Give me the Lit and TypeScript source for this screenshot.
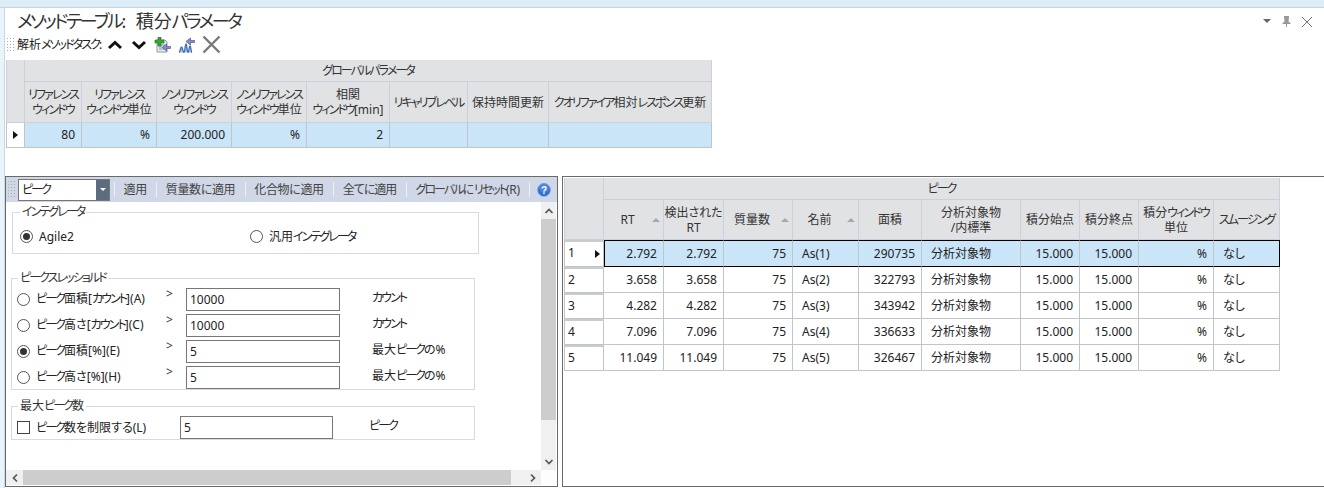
import { LitElement, html, css } from "lit";
import { customElement } from "lit/decorators.js";

/* Katakana is much narrower in the reference's UI face, so kana runs get their own tracking. */
const t = (s: string) =>
  s.split(/([\u30A0-\u30FF]+)/).map((p, i) => (i % 2 ? html`<span class="k">${p}</span>` : p));

const chevron = (d: string) => html`<svg class="sc" viewBox="0 0 10 10"><path d=${d} fill="none" stroke="#555" stroke-width="1.7"/></svg>`;

const rows = [
  ["2.792", "75", "As(1)", "290735"],
  ["3.658", "75", "As(2)", "322793"],
  ["4.282", "75", "As(3)", "343942"],
  ["7.096", "75", "As(4)", "336633"],
  ["11.049", "75", "As(5)", "326467"],
];

const thresholds = [
  { label: "ピーク面積[カウント](A)", value: "10000", unit: "カウント", on: false },
  { label: "ピーク高さ[カウント](C)", value: "10000", unit: "カウント", on: false },
  { label: "ピーク面積[%](E)", value: "5", unit: "最大ピークの%", on: true },
  { label: "ピーク高さ[%](H)", value: "5", unit: "最大ピークの%", on: false },
];

@customElement("app-root")
export class AppRoot extends LitElement {
  static styles = css`
    :host {
      display: block; width: 1324px; height: 488px; overflow: hidden; background: #e9f3fa;
      font: 12px/16px "Noto Sans", "Noto Sans CJK JP", sans-serif; color: #222;
      font-feature-settings: "palt";
    }
    * { box-sizing: border-box; }
    .k { letter-spacing: -0.16em; }
    .strip { height: 8px; background: #dcedf8; border-bottom: 1px solid #c3d5e0; }
    .main { margin-left: 4px; height: 480px; background: #fff; border-left: 1px solid #cbd8e2; display: flex; flex-direction: column; }
    .top { height: 168px; padding-left: 1px; }
    .titlebar { height: 25px; display: flex; align-items: center; padding: 0 11px; justify-content: space-between; }
    .title { font-size: 18px; line-height: 24px; color: #333; white-space: pre; }
    .title .k { letter-spacing: -0.14em; }
    .winbtns { display: flex; align-items: center; gap: 9px; margin-top: 2px; }
    .taskbar { height: 27px; display: flex; align-items: center; padding-bottom: 4px; }
    .grip { width: 9px; height: 15px; margin-right: 2px; background-image: radial-gradient(#aaa 0.7px, transparent 0.9px); background-size: 3px 3px; }
    .tasklabel { width: 90px; white-space: nowrap; }
    .taskicons { display: flex; align-items: center; }
    .taskicons svg { display: block; }

    .grid { display: grid; }
    .g1 { width: 706px; grid-template-columns: 19px 57px 75px 75px 75px 83px 78px 81px 163px; grid-template-rows: 22px 41px 25px; }
    .g2 { width: 716px; grid-template-columns: 40px 60px 60px 69px 66px 63px 99px 59px 59px 75px 66px; grid-template-rows: 22px 40px 27px 26px 26px 26px 26px; }
    .c { display: flex; align-items: center; border-right: 1px solid #c0c5c9; border-bottom: 1px solid #c0c5c9; padding: 0 6px; white-space: nowrap; position: relative; }
    .h { background: #e1e2e4; border-color: #cdcfdf; justify-content: center; text-align: center; padding: 0 1px; line-height: 15px; color: #333; }
    .stub { grid-row: span 2; border-left: 1px solid #cdcfdf; }
    .group { grid-column: 2 / -1; }
    .r { justify-content: flex-end; }
    .l { padding-left: 9px; }
    .sel { background: #cbe5f8; }
    .hot { border-top: 1px solid #000; border-bottom: 1px solid #000; }
    .hot.first { border-left: 1px solid #000; }
    .hot.last { border-right: 1px solid #000; }
    .rh { background: #fff; justify-content: space-between; align-items: flex-start; padding: 3px 3px 0 3px; border-left: 1px solid #c0c5c9; border-top: 2px solid #c8ccd0; }
    .rh1 { border-left: 1px solid #c0c5c9; background: #fff; justify-content: center; padding: 0; }
    .tri { width: 0; height: 0; border-left: 5px solid #111; border-top: 4.5px solid transparent; border-bottom: 4.5px solid transparent; }
    .rh .tri { margin-top: 5px; }
    .sorted { padding-right: 13px; }
    .sort { position: absolute; right: 3px; top: 18px; width: 0; height: 0; border-bottom: 4px solid #a8a8a8; border-left: 4px solid transparent; border-right: 4px solid transparent; }

    .bottom { flex: 1; height: 311px; display: flex; gap: 4px; background: #fff; padding-bottom: 1px; }
    .left { width: 553px; flex: none; display: flex; flex-direction: column; border: 1px solid #6a6a6a; }
    .right { flex: 1; border: 1px solid #6a6a6a; border-right: 0; padding: 1px 0 0 1px; }
    .tb { height: 25px; flex: none; background: #d0d7e6; display: flex; align-items: center; color: #444; }
    .tb .grip { width: 8px; margin: 0 3px 0 0; height: 19px; flex: none; margin-left: 1px; }
    .combo { width: 92px; flex: none; height: 22px; background: #fff; border: 1px solid #777; display: flex; justify-content: space-between; align-items: center; padding-left: 3px; color: #222; }
    .dd { width: 13px; height: 20px; background: #5b6b80; display: flex; align-items: center; justify-content: center; }
    .dd i { border-top: 3px solid #fff; border-left: 3.5px solid transparent; border-right: 3.5px solid transparent; }
    .gap4 { width: 4px; flex: none; }
    .sep { width: 1px; height: 15px; background: #eef0f5; flex: none; }
    .btn { white-space: nowrap; padding: 0 9.5px 0 8.5px; letter-spacing: -0.35px; }
    .btn.tight { letter-spacing: -1px; }
    .help { width: 14px; height: 14px; margin-left: 7px; display: block; flex: none; }

    .body { flex: 1; display: grid; grid-template-columns: 535px 15px; grid-template-rows: 268px 15px; min-height: 0; }
    .content { padding: 0 0 0 6px; background: #fff; }
    fieldset { border: 1px solid #dadada; margin: 0; padding: 0; min-width: 0; }
    legend { padding: 0 2px; line-height: 16px; color: #333; }
    .f1 { width: 467px; height: 50px; margin-top: 2px; }
    .f1 legend { margin-left: 7px; }
    .f1row { display: flex; align-items: center; height: 33px; padding-left: 7px; }
    .f1row > .opt:first-child { width: 230px; }
    .f2 { width: 464px; height: 120px; margin-top: 16px; margin-left: -1px; }
    .f2 legend, .f3 legend { margin-left: 6px; }
    .trow { height: 26px; display: grid; grid-template-columns: 149px 20px 154px 1fr; align-items: center; padding-left: 5px; }
    .opt { display: flex; align-items: center; gap: 6px; white-space: nowrap; }
    .radio { width: 13px; height: 13px; border: 1px solid #555; border-radius: 50%; display: flex; align-items: center; justify-content: center; flex: none; background: #fff; }
    .radio i { width: 7px; height: 7px; border-radius: 50%; background: #333; }
    .gt { margin-top: -10px; color: #333; }
    input { height: 23px; width: 154px; border: 1px solid #777; padding: 0 3px; font: inherit; color: #222; background: #fff; outline: none; display: block; }
    .unit { padding-left: 32px; white-space: nowrap; margin-top: -3px; }
    .f3 { width: 464px; height: 42px; margin-top: 8px; margin-left: -1px; }
    .lrow { display: grid; grid-template-columns: 163px 153px 1fr; align-items: center; padding: 2px 0 0 5px; }
    .lrow input { width: 153px; }
    .check { width: 13px; height: 13px; border: 1px solid #444; flex: none; background: #fff; }
    .unit2 { padding-left: 36px; margin-top: -4px; white-space: nowrap; }
    .vbar { background: #f0f0f0; display: flex; flex-direction: column; }
    .hbar { background: #f0f0f0; display: flex; }
    .corner { background: #fdfdfd; }
    .sb { flex: none; width: 15px; height: 17px; display: flex; align-items: center; justify-content: center; }
    .hbar .sb { width: 17px; height: 15px; }
    .sc { width: 10px; height: 10px; display: block; }
    .thumb { background: #cdcdcd; }
    .vbar .thumb { height: 201px; }
    .hbar .thumb { width: 488px; }
    .fill { flex: 1; }
    .m8 { margin-right: 8px; }
    .m7 { margin-right: 7px; }
  `;

  private taskIcons() {
    return html`<div class="taskicons">
      <svg class="m8" width="16" height="12" viewBox="0 0 16 12"><path d="M2 9 8 3.500 14 9" fill="none" stroke="#111" stroke-width="3"/></svg>
      <svg class="m7" width="16" height="12" viewBox="0 0 16 12"><path d="M2 3 8 8.500 14 3" fill="none" stroke="#111" stroke-width="3"/></svg>
      <svg class="m7" width="17" height="16" viewBox="0 0 17 16">
        <path d="M3 3h8l2 2v10H3z" fill="#e6ecef" stroke="#8b9aa3"/>
        <path d="M5 8h6M5 10h6M5 12h6" stroke="#7f94a8"/>
        <path d="M4 0h3v3h3v3H7v3H4V6H1V3h3z" fill="#3aa63a" stroke="#1c6f1c" stroke-width=".6"/>
        <path d="M16.500 9.500h-4V7L8.500 10.500 12.500 14v-2.500h4z" fill="#8f8bc9" stroke="#55518f" stroke-width=".7"/>
      </svg>
      <svg class="m7" width="17" height="16" viewBox="0 0 17 16">
        <path d="M1 15.500C2 15.500 2.500 10 3.500 10S5 15.500 6 15.500 7 7 8 7 9 15.500 10 15.500 11 9 12 9 13 15.500 14 15.500" fill="#a9c0e2" stroke="#3f6fb5" stroke-width="1.300"/>
        <path d="M16.500 3.500h-4V1L8 4.500 12.500 8V5.500h4z" fill="#8f8bc9" stroke="#55518f" stroke-width=".7"/>
      </svg>
      <svg width="19" height="19" viewBox="0 0 19 19"><path d="M1.500 1.500 17.500 17.500M17.500 1.500 1.500 17.500" stroke="#787878" stroke-width="2.400"/></svg>
    </div>`;
  }

  private table1() {
    const heads = ["リファレンス\nウィンドウ", "リファレンス\nウィンドウ単位", "ノンリファレンス\nウィンドウ", "ノンリファレンス\nウィンドウ単位", "相関\nウィンドウ[min]", "リキャリブレベル", "保持時間更新", "クオリファイア相対レスポンス更新"];
    const vals = ["80", "%", "200.000", "%", "2", "", "", ""];
    return html`<div class="grid g1">
      <div class="c h stub"></div>
      <div class="c h group">${t("グローバルパラメータ")}</div>
      ${heads.map((h) => html`<div class="c h"><div>${h.split("\n").map((s, i) => html`${i ? html`<br />` : ""}${t(s)}`)}</div></div>`)}
      <div class="c rh1"><span class="tri"></span></div>
      ${vals.map((v) => html`<div class="c r sel">${v}</div>`)}
    </div>`;
  }

  private table2() {
    const heads: [string, boolean][] = [
      ["RT", true], ["検出された\nRT", false], ["質量数", true], ["名前", true], ["面積", false],
      ["分析対象物\n/内標準", false], ["積分始点", false], ["積分終点", false], ["積分ウィンドウ\n単位", false], ["スムージング", false],
    ];
    return html`<div class="grid g2">
      <div class="c h stub"></div>
      <div class="c h group">${t("ピーク")}</div>
      ${heads.map(([h, s]) => html`<div class="c h ${s ? "sorted" : ""}"><div>${h.split("\n").map((p, i) => html`${i ? html`<br />` : ""}${t(p)}`)}</div>${s ? html`<span class="sort"></span>` : ""}</div>`)}
      ${rows.map((r, i) => {
        const on = i === 0;
        const cls = `${on ? "sel hot" : ""}`;
        return html`
          <div class="c rh"><span>${i + 1}</span>${on ? html`<span class="tri"></span>` : ""}</div>
          <div class="c r first ${cls}">${r[0]}</div>
          <div class="c r ${cls}">${r[0]}</div>
          <div class="c r ${cls}">${r[1]}</div>
          <div class="c l ${cls}">${r[2]}</div>
          <div class="c r ${cls}">${r[3]}</div>
          <div class="c l ${cls}">分析対象物</div>
          <div class="c r ${cls}">15.000</div>
          <div class="c r ${cls}">15.000</div>
          <div class="c r ${cls}">%</div>
          <div class="c l last ${cls}">なし</div>`;
      })}
    </div>`;
  }

  private radio(on: boolean) {
    return html`<span class="radio">${on ? html`<i></i>` : ""}</span>`;
  }

  render() {
    return html`
      <div class="strip"></div>
      <div class="main">
        <div class="top">
          <div class="titlebar">
            <div class="title">${t("メソッドテーブル")}:  ${t("積分パラメータ")}</div>
            <div class="winbtns">
              <svg width="9" height="5" viewBox="0 0 9 5"><path d="M0 0h8L4 4z" fill="#666"/></svg>
              <svg class="pin" width="11" height="11" viewBox="0 0 11 11"><path d="M3 0h5v1L7.500 5.500 9.500 7v1H6v3H5V8H1.500V7l2-1.500L3 1z" fill="#999"/></svg>
              <svg width="12" height="12" viewBox="0 0 12 12"><path d="M1 1 11 11M11 1 1 11" stroke="#666" stroke-width=".9"/></svg>
            </div>
          </div>
          <div class="taskbar">
            <div class="grip"></div>
            <div class="tasklabel">${t("解析メソッドタスク")}:</div>
            ${this.taskIcons()}
          </div>
          ${this.table1()}
        </div>
        <div class="bottom">
          <div class="left">
            <div class="tb">
              <div class="grip"></div>
              <div class="combo"><span>${t("ピーク")}</span><span class="dd"><i></i></span></div>
              <div class="gap4"></div>
              <div class="sep"></div>
              <div class="btn">適用</div><div class="sep"></div>
              <div class="btn">質量数に適用</div><div class="sep"></div>
              <div class="btn">化合物に適用</div><div class="sep"></div>
              <div class="btn tight">全てに適用</div><div class="sep"></div>
              <div class="btn">${t("グローバルにリセット")}(R)</div><div class="sep"></div>
              <svg class="help" viewBox="0 0 14 14"><circle cx="7" cy="7" r="6.500" fill="#2f6fd0" stroke="#8fb0dc"/><circle cx="7" cy="5" r="5" fill="#5b93e4" opacity=".6"/><text x="7" y="10.500" text-anchor="middle" font-size="10" font-weight="700" fill="#fff" font-family="Liberation Sans">?</text></svg>
            </div>
            <div class="body">
              <div class="content">
                <fieldset class="f1">
                  <legend>${t("インテグレータ")}</legend>
                  <div class="f1row">
                    <label class="opt">${this.radio(true)}Agile2</label>
                    <label class="opt">${this.radio(false)}<span>${t("汎用インテグレータ")}</span></label>
                  </div>
                </fieldset>
                <fieldset class="f2">
                  <legend>${t("ピークスレッショルド")}</legend>
                  ${thresholds.map((r) => html`<div class="trow">
                    <label class="opt">${this.radio(r.on)}<span>${t(r.label)}</span></label>
                    <span class="gt">&gt;</span>
                    <input .value=${r.value} />
                    <span class="unit">${t(r.unit)}</span>
                  </div>`)}
                </fieldset>
                <fieldset class="f3">
                  <legend>${t("最大ピーク数")}</legend>
                  <div class="lrow">
                    <label class="opt"><span class="check"></span><span>${t("ピーク数を制限する")}(L)</span></label>
                    <input .value=${"5"} />
                    <span class="unit2">${t("ピーク")}</span>
                  </div>
                </fieldset>
              </div>
              <div class="vbar">
                <div class="sb">${chevron("M1.500 7 5 3.500 8.500 7")}</div>
                <div class="thumb"></div>
                <div class="fill"></div>
                <div class="sb">${chevron("M1.500 3 5 6.500 8.500 3")}</div>
              </div>
              <div class="hbar">
                <div class="sb">${chevron("M7 1.500 3.500 5 7 8.500")}</div>
                <div class="thumb"></div>
                <div class="fill"></div>
                <div class="sb">${chevron("M3 1.500 6.500 5 3 8.500")}</div>
              </div>
              <div class="corner"></div>
            </div>
          </div>
          <div class="right">${this.table2()}</div>
        </div>
      </div>
    `;
  }
}
